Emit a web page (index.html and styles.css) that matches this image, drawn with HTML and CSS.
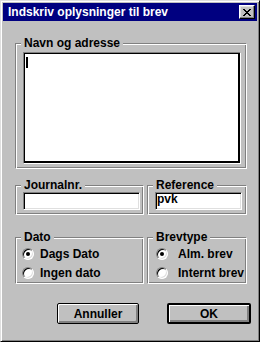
FILE: index.html
```html
<!DOCTYPE html>
<html lang="da">
<head>
  <meta charset="UTF-8">
  <title>Indskriv oplysninger til brev</title>
  <link rel="stylesheet" href="styles.css">
</head>
<body>
  <div class="window">
    <div class="titlebar">
      <span class="title">Indskriv oplysninger til brev</span>
      <span class="close">
        <svg width="8" height="7" viewBox="0 0 8 7" shape-rendering="crispEdges">
          <path d="M0 0h2v1h-2zM6 0h2v1h-2zM1 1h2v1h-2zM5 1h2v1h-2zM2 2h4v1h-4zM3 3h2v1h-2zM2 4h4v1h-4zM1 5h2v1h-2zM5 5h2v1h-2zM0 6h2v1h-2zM6 6h2v1h-2z" fill="#000"/>
        </svg>
      </span>
    </div>

    <div class="content">
      <div class="group group-address">
        <span class="legend">Navn og adresse</span>
        <div class="field field-area"><span class="caret"></span></div>
      </div>

      <div class="row row-fields">
        <div class="group group-left">
          <span class="legend">Journalnr.</span>
          <div class="field field-line field-journal"></div>
        </div>
        <div class="group group-right">
          <span class="legend">Reference</span>
          <div class="field field-line field-ref">pvk</div>
        </div>
      </div>

      <div class="row row-options">
        <div class="group group-left">
          <span class="legend">Dato</span>
          <div class="options">
            <div class="option"><span class="radio checked"></span>Dags Dato</div>
            <div class="option"><span class="radio"></span>Ingen dato</div>
          </div>
        </div>
        <div class="group group-right">
          <span class="legend">Brevtype</span>
          <div class="options options-wide">
            <div class="option"><span class="radio checked"></span>Alm. brev</div>
            <div class="option"><span class="radio"></span>Internt brev</div>
          </div>
        </div>
      </div>

      <div class="buttons">
        <span class="btn btn-cancel">Annuller</span>
        <span class="btn btn-ok">OK</span>
      </div>
    </div>
  </div>
</body>
</html>
```

FILE: styles.css
```css
html,body{
  margin: 0;
  padding: 0;
}
*{
  box-sizing: border-box;
}
body{
  background-color: #c0c0c0;
  font: bold 12px "Liberation Sans", Arial, sans-serif;
  color: #000;
}
.window{
  width: 260px;
  height: 342px;
  padding: 2px;
  background-color: #c0c0c0;
  border: 1px solid;
  border-color: #dfdfdf #000 #000 #dfdfdf;
  box-shadow: inset 1px 1px #fff, inset -1px -1px #808080;
}
.titlebar{
  height: 18px;
  display: flex;
  align-items: center;
  justify-content: space-between;
  padding: 0 2px 0 5px;
  background-color: #000080;
  color: #fff;
}
.close{
  width: 16px;
  height: 14px;
  display: flex;
  align-items: center;
  justify-content: center;
  background-color: #c0c0c0;
  border: 1px solid;
  border-color: #fff #000 #000 #fff;
  box-shadow: inset -1px -1px #808080, inset 1px 1px #dfdfdf;
}
.close svg{
  display: block;
}
.content{
  padding: 22px 0 0 12px;
}
/* etched group box */
.group{
  border: 1px solid;
  border-color: #808080 #fff #fff #808080;
  box-shadow: inset 1px 1px #fff, inset -1px -1px #808080;
}
.legend{
  display: table;
  margin: -8px 0 0 5px;
  padding: 0 3px;
  line-height: 14px;
  background-color: #c0c0c0;
}
.group-address{
  width: 232px;
  padding-bottom: 4px;
}
.row{
  display: flex;
  gap: 3px;
}
.row-fields{
  margin-top: 16px;
}
.row-options{
  margin-top: 22px;
}
.group-left{
  width: 129px;
}
.group-right{
  width: 100px;
}
.row-fields .group{
  padding-bottom: 4px;
}
.field{
  background-color: #fff;
  border: 1px solid;
  border-color: #808080 #fff #fff #808080;
  box-shadow: inset 1px 1px #000, inset -1px -1px #dfdfdf;
}
.field-area{
  width: 218px;
  height: 112px;
  margin: 2px 0 0 7px;
  padding: 4px 0 0 2px;
  box-shadow: inset 1px 1px #000, inset -2px -2px #000;
}
.caret{
  display: block;
  width: 2px;
  height: 11px;
  background-color: #000;
}
.field-line{
  height: 18px;
  padding: 0 0 0 1px;
  line-height: 13px;
}
.field-journal{
  width: 117px;
  margin-left: 7px;
}
.field-ref{
  width: 87px;
  margin-left: 7px;
}
.options{
  padding: 0 0 1px 6px;
}
.options-wide{
  padding-left: 8px;
}
.option{
  height: 19px;
  display: flex;
  align-items: center;
  gap: 6px;
}
.options-wide .option{
  gap: 10px;
}
.radio{
  width: 12px;
  height: 12px;
  flex: none;
  display: flex;
  align-items: center;
  justify-content: center;
  border-radius: 50%;
  background-color: #fff;
  border: 1px solid;
  border-color: #808080 #fff #fff #808080;
  box-shadow: inset 1px 1px #000, inset -1px -1px #dfdfdf;
}
.radio.checked::after{
  content: "";
  width: 4px;
  height: 4px;
  border-radius: 50%;
  background-color: #000;
}
.buttons{
  display: flex;
  gap: 28px;
  margin-top: 19px;
  padding-left: 42px;
}
.btn{
  height: 21px;
  display: flex;
  align-items: center;
  justify-content: center;
  border: 1px solid #000;
  border-radius: 2px;
  box-shadow: inset 1px 1px #fff, inset -2px -2px #808080;
}
.btn-cancel{
  width: 82px;
}
.btn-ok{
  width: 84px;
  border-width: 2px;
}
```
